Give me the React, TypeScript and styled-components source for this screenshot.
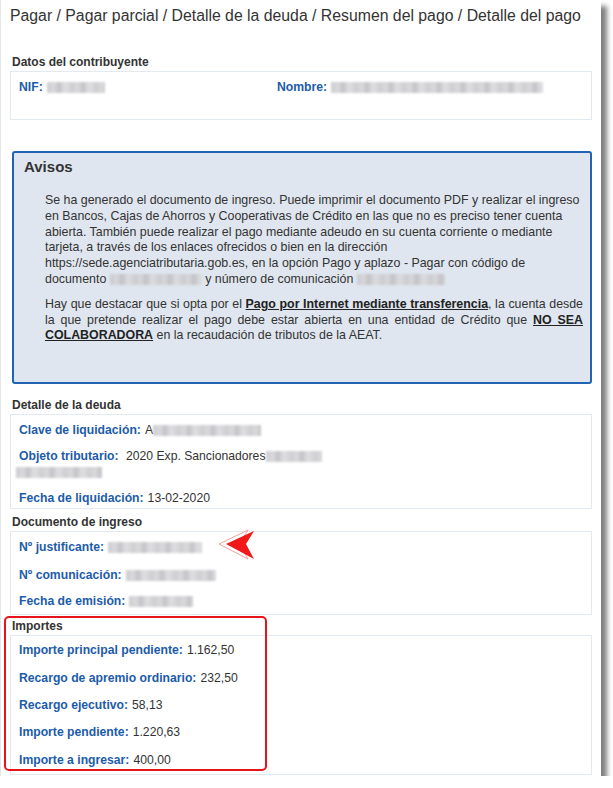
import React from "react";
import styled, { createGlobalStyle } from "styled-components";

const GlobalStyle = createGlobalStyle`
  html, body { margin: 0; padding: 0; background: #ffffff; }
  body { font-family: "Liberation Sans", Arial, sans-serif; color: #333; }
`;

const Page = styled.div`
  position: relative;
  width: 601px;
  height: 776px;
  box-sizing: border-box;
  background: #fff;
  border-left: 1px solid #e6e6e6;
  box-shadow: 6px 6px 5px rgba(0, 0, 0, 0.5);
  padding: 6px 0 0 0;
  overflow: hidden;
`;

const Title = styled.h1`
  margin: 0 0 0 9px;
  font-size: 15.8px;
  font-weight: normal;
  color: #333;
  line-height: 20px;
  white-space: nowrap;
`;

const SectionLabel = styled.div<{ $top?: number }>`
  margin: ${(p) => p.$top ?? 0}px 0 0 11px;
  font-size: 12px;
  font-weight: bold;
  color: #333;
  line-height: 15px;
`;

const Box = styled.div<{ $h: number; $pt: number }>`
  margin: 1px 9px 0 9px;
  border: 1px solid #e3e9f1;
  box-sizing: border-box;
  height: ${(p) => p.$h}px;
  padding: ${(p) => p.$pt}px 8px 0 8px;
`;

const InfoGrid = styled.div`
  display: grid;
  grid-template-columns: 258px 1fr;
`;

const Row = styled.div<{ $gap?: number }>`
  font-size: 12.2px;
  line-height: 15px;
  margin-bottom: ${(p) => p.$gap ?? 12}px;
  display: flex;
  align-items: center;
  flex-wrap: wrap;
`;

const Key = styled.span`
  font-weight: bold;
  color: #1c5ca9;
  margin-right: 4px;
`;

const Val = styled.span`
  color: #333;
`;

const WrapLine = styled.div`
  width: 100%;
  margin: 1px 0 0 -3px;
  height: 15px;
  display: flex;
  align-items: center;
`;

const Blur = styled.span<{ $w: number }>`
  display: inline-block;
  width: ${(p) => p.$w}px;
  height: 11px;
  vertical-align: middle;
  background: repeating-linear-gradient(
    90deg,
    #c9c9cc 0px,
    #d6d5d8 7px,
    #bfbdc2 12px,
    #dcdcde 18px,
    #cfcfd2 24px
  );
  filter: blur(1.2px);
  opacity: 0.9;
`;

const Avisos = styled.div`
  margin: 31px 9px 0 11px;
  height: 233px;
  box-sizing: border-box;
  border: 2px solid #2264b4;
  border-radius: 3px;
  background: #dfe6ef;
  padding: 5px 7px 0 10px;
`;

const AvisosTitle = styled.div`
  font-size: 15px;
  font-weight: bold;
  color: #333;
  line-height: 18px;
  margin-bottom: 17px;
`;

const Para = styled.p<{ $justify?: boolean }>`
  margin: 0 0 9px 21px;
  font-size: 12.4px;
  line-height: 15.8px;
  color: #333;
  text-align: ${(p) => (p.$justify ? "justify" : "left")};
`;

const Strong = styled.span`
  font-weight: bold;
  text-decoration: underline;
  color: #222;
`;

const Highlight = styled.div`
  position: absolute;
  left: 3px;
  top: 616px;
  width: 263px;
  height: 155px;
  box-sizing: border-box;
  border: 2px solid #e8141c;
  border-radius: 5px;
  pointer-events: none;
`;

const ArrowSvg = styled.svg`
  position: absolute;
  left: 217px;
  top: 529px;
`;

export default function App() {
  return (
    <>
      <GlobalStyle />
      <Page>
        <Title>Pagar / Pagar parcial / Detalle de la deuda / Resumen del pago / Detalle del pago</Title>

        <SectionLabel $top={29}>Datos del contribuyente</SectionLabel>
        <Box $h={49} $pt={8}>
          <InfoGrid>
            <Row>
              <Key>NIF:</Key>
              <Blur $w={58} />
            </Row>
            <Row>
              <Key>Nombre:</Key>
              <Blur $w={212} />
            </Row>
          </InfoGrid>
        </Box>

        <Avisos>
          <AvisosTitle>Avisos</AvisosTitle>
          <Para>
            Se ha generado el documento de ingreso. Puede imprimir el documento PDF y realizar el ingreso en
            Bancos, Cajas de Ahorros y Cooperativas de Crédito en las que no es preciso tener cuenta abierta.
            También puede realizar el pago mediante adeudo en su cuenta corriente o mediante tarjeta, a través
            de los enlaces ofrecidos o bien en la dirección https://sede.agenciatributaria.gob.es, en la opción
            Pago y aplazo - Pagar con código de documento <Blur $w={92} /> y número de comunicación{" "}
            <Blur $w={88} />
          </Para>
          <Para $justify>
            Hay que destacar que si opta por el <Strong>Pago por Internet mediante transferencia</Strong>, la
            cuenta desde la que pretende realizar el pago debe estar abierta en una entidad de Crédito que{" "}
            <Strong>NO SEA COLABORADORA</Strong> en la recaudación de tributos de la AEAT.
          </Para>
        </Avisos>

        <SectionLabel $top={14}>Detalle de la deuda</SectionLabel>
        <Box $h={95} $pt={8}>
          <Row $gap={11}>
            <Key>Clave de liquidación:</Key>
            <Val>A</Val>
            <Blur $w={108} />
          </Row>
          <Row $gap={11}>
            <Key>Objeto tributario:</Key>
            <Val>&nbsp;2020 Exp. Sancionadores</Val>
            <Blur $w={56} />
            <WrapLine>
              <Blur $w={86} />
            </WrapLine>
          </Row>
          <Row>
            <Key>Fecha de liquidación:</Key>
            <Val>13-02-2020</Val>
          </Row>
        </Box>

        <SectionLabel $top={6}>Documento de ingreso</SectionLabel>
        <Box $h={84} $pt={8}>
          <Row $gap={13}>
            <Key>Nº justificante:</Key>
            <Blur $w={94} />
          </Row>
          <Row $gap={11}>
            <Key>Nº comunicación:</Key>
            <Blur $w={90} />
          </Row>
          <Row>
            <Key>Fecha de emisión:</Key>
            <Blur $w={64} />
          </Row>
        </Box>

        <SectionLabel $top={4}>Importes</SectionLabel>
        <Box $h={140} $pt={7}>
          <Row $gap={13}>
            <Key>Importe principal pendiente:</Key>
            <Val>1.162,50</Val>
          </Row>
          <Row $gap={12}>
            <Key>Recargo de apremio ordinario:</Key>
            <Val>232,50</Val>
          </Row>
          <Row $gap={12}>
            <Key>Recargo ejecutivo:</Key>
            <Val>58,13</Val>
          </Row>
          <Row $gap={13}>
            <Key>Importe pendiente:</Key>
            <Val>1.220,63</Val>
          </Row>
          <Row>
            <Key>Importe a ingresar:</Key>
            <Val>400,00</Val>
          </Row>
        </Box>

        <Highlight />
        <ArrowSvg width="40" height="32" viewBox="0 0 40 32">
          <polygon points="1,15 30,1 21,15 30,30" fill="none" stroke="#f4a0a0" strokeWidth="1" />
          <polygon points="8,15 36,2 28,15 36,30" fill="#f01818" />
        </ArrowSvg>
      </Page>
    </>
  );
}
